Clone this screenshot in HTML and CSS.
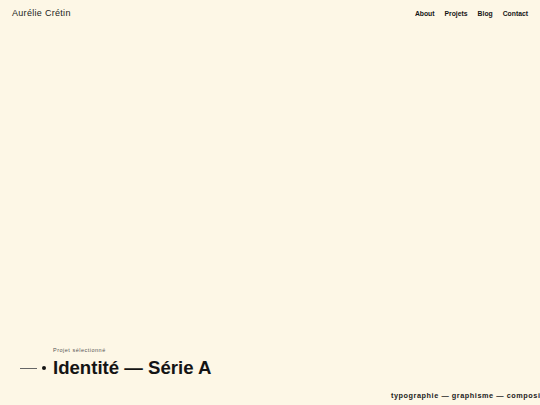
FILE: index.html
```html
<!DOCTYPE html>
<html lang="fr">
<head>
<meta charset="utf-8">
<link rel="stylesheet" href="styles.css">
</head>
<body>
<div class="page">
  <header class="top">
    <div class="brand">Aurélie Crétin</div>
    <nav class="nav">
      <a>About</a><a>Projets</a><a>Blog</a><a>Contact</a>
    </nav>
  </header>
  <main class="hero">
    <div class="label">Projet sélectionné</div>
    <div class="titlerow">
      <span class="line"></span><span class="dot"></span>
      <h1 class="title">Identité — Série A</h1>
    </div>
  </main>
  <div class="ticker"><span>typographie — graphisme — composition — mise en page</span></div>
</div>
</body>
</html>
```
FILE: styles.css
```css
html, body { margin: 0; padding: 0; }
body {
  background: #fdf7e6;
  color: #141414;
  font-family: "Liberation Sans", Arial, sans-serif;
  width: 540px; height: 405px; overflow: hidden;
}
.page { position: relative; width: 540px; height: 405px; display: flex; flex-direction: column; }
.top { display: flex; justify-content: space-between; align-items: center; padding: 7px 12px 0 12px; height: 12px; }
.brand { font-size: 9px; letter-spacing: 0.3px; color: #222; }
.nav { display: flex; gap: 10px; }
.nav a { font-size: 6.8px; font-weight: bold; color: #141414; }
.hero { margin-top: auto; padding: 0 0 25px 20px; }
.label { font-size: 5.5px; letter-spacing: 0.5px; color: #555; margin-left: 33px; margin-bottom: 3px; }
.titlerow { display: flex; align-items: center; }
.line { width: 17px; height: 1px; background: #666; }
.dot { width: 4px; height: 4px; border-radius: 50%; background: #141414; margin-left: 5px; margin-right: 7px; }
.title { margin: 0; font-size: 18.6px; font-weight: bold; line-height: 24px; color: #141414; }
.ticker { position: absolute; left: 391px; top: 391px; white-space: nowrap; font-size: 7.3px; font-weight: bold; letter-spacing: 0.55px; color: #222; }
```
